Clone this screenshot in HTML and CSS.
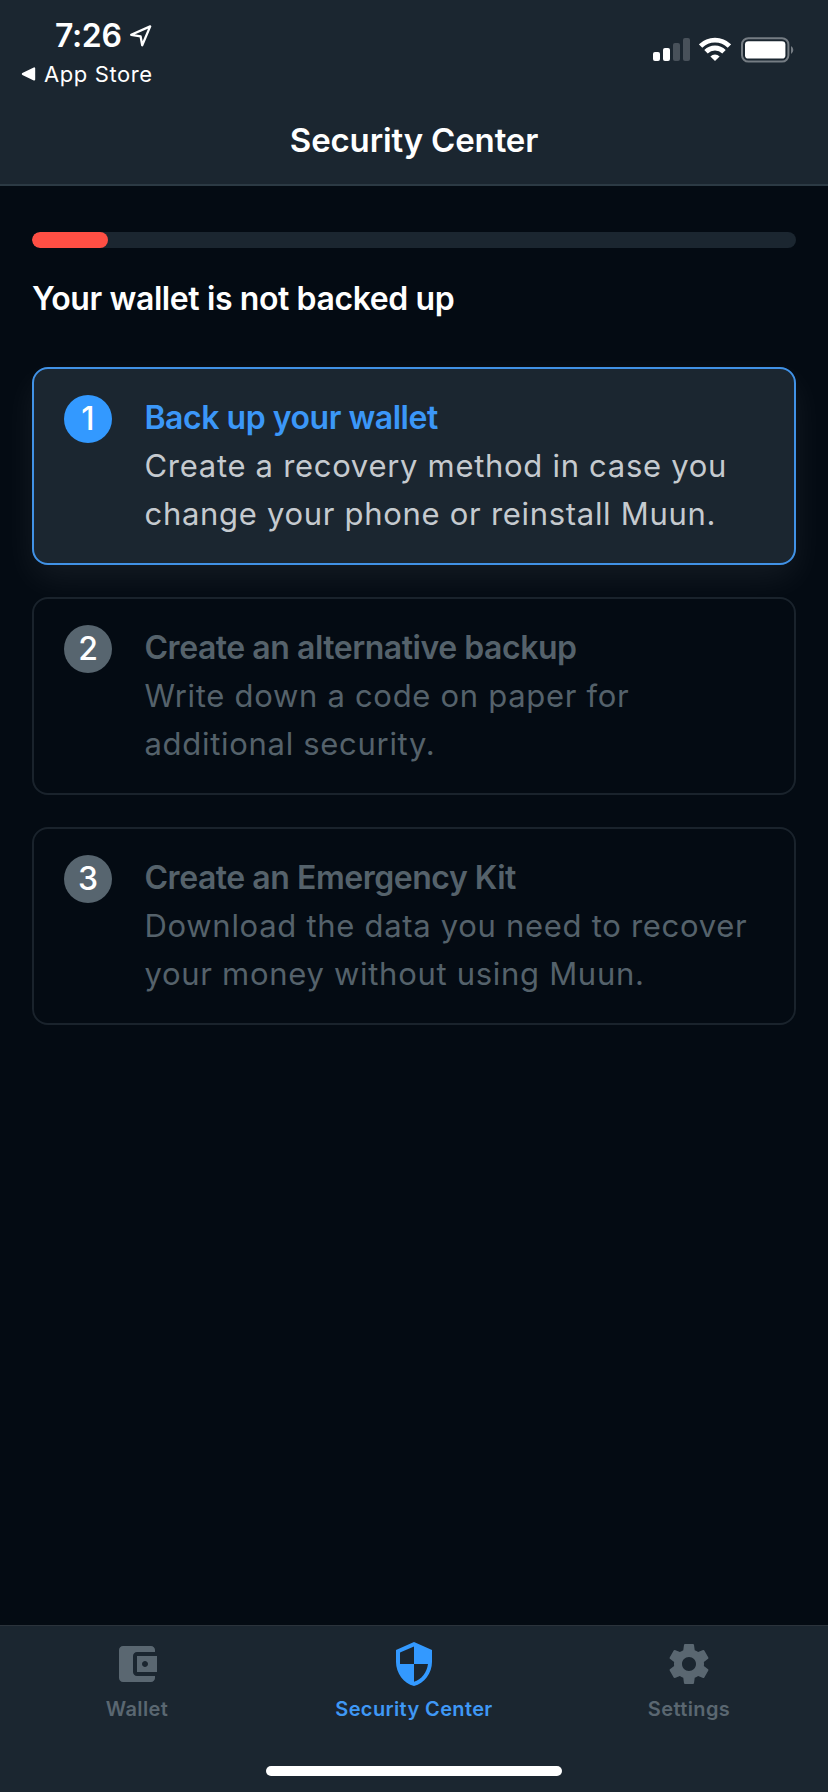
FILE: index.html
```html
<!DOCTYPE html>
<html lang="en">
<head>
<meta charset="utf-8">
<title>Security Center</title>
<link rel="stylesheet" href="styles.css">
</head>
<body>
<div class="screen">
  <header class="header">
    <div class="status">
      <div class="status-left">
        <div class="clock"><span class="time">7:26</span>
          <svg class="locate" width="24" height="24" viewBox="0 0 24 24"><path d="M2.2 10.8 21.2 2.4 13.2 21.2 11.6 12.4Z" fill="none" stroke="#fff" stroke-width="2.3" stroke-linejoin="round"/></svg>
        </div>
        <div class="back">
          <svg width="15" height="14" viewBox="0 0 15 14"><path d="M1.8 7 13.2 1.4V12.6Z" fill="#fff" stroke="#fff" stroke-width="2" stroke-linejoin="round"/></svg>
          <span class="back-label">App Store</span>
        </div>
      </div>
      <div class="status-right">
        <svg width="37" height="24" viewBox="0 0 37 24"><g fill="#fff"><rect x="0" y="14" width="7" height="9" rx="2"/><rect x="10" y="10" width="7" height="13" rx="2"/></g><g fill="#48515a"><rect x="20" y="5" width="7" height="18" rx="2"/><rect x="30" y="0" width="7" height="23" rx="2"/></g></svg>
        <svg class="wifi" width="32" height="24" viewBox="0 0 32 24"><g fill="none" stroke="#fff" stroke-width="4.8"><path d="M1.6 9A20.4 20.4 0 0 1 30.4 9"/><path d="M7 14.8A12.6 12.6 0 0 1 25 14.8"/></g><path d="M16 24 11.4 19.4A6.6 6.6 0 0 1 20.6 19.4Z" fill="#fff"/></svg>
        <svg class="battery" width="54" height="26" viewBox="0 0 54 26"><rect x="1" y="1.2" width="46.4" height="23.4" rx="6.4" fill="none" stroke="#757c83" stroke-width="2"/><rect x="4" y="4.2" width="40.4" height="17.4" rx="3.4" fill="#fff"/><path d="M50 9a4.6 4.6 0 0 1 0 8Z" fill="#757c83"/></svg>
      </div>
    </div>
    <h1 class="title">Security Center</h1>
  </header>

  <main class="content">
    <div class="progress"><div class="progress-fill"></div></div>
    <h2 class="state">Your wallet is not backed up</h2>
    <div class="cards">
      <section class="card card-active">
        <div class="num">1</div>
        <div class="text">
          <h3 class="card-title">Back up your wallet</h3>
          <p class="desc">Create a recovery method in case you<br>change your phone or reinstall Muun.</p>
        </div>
      </section>
      <section class="card">
        <div class="num">2</div>
        <div class="text">
          <h3 class="card-title">Create an alternative backup</h3>
          <p class="desc">Write down a code on paper for<br>additional security.</p>
        </div>
      </section>
      <section class="card">
        <div class="num">3</div>
        <div class="text">
          <h3 class="card-title">Create an Emergency Kit</h3>
          <p class="desc">Download the data you need to recover<br>your money without using Muun.</p>
        </div>
      </section>
    </div>
  </main>

  <footer class="footer">
    <nav class="tabs">
      <div class="tab">
        <svg class="tab-icon" viewBox="0 0 24 24"><path d="M21 18v1c0 1.1-.9 2-2 2H5c-1.11 0-2-.9-2-2V5c0-1.1.89-2 2-2h14c1.1 0 2 .9 2 2v1h-9c-1.11 0-2 .9-2 2v8c0 1.1.89 2 2 2h9zm-9-2h10V8H12v8zm4-2.5c-.83 0-1.5-.67-1.5-1.5s.67-1.5 1.5-1.5 1.5.67 1.5 1.5-.67 1.5-1.5 1.5z"/></svg>
        <span class="tab-label">Wallet</span>
      </div>
      <div class="tab tab-active">
        <svg class="tab-icon" viewBox="0 0 24 24"><path d="M12 1L3 5v6c0 5.55 3.84 10.74 9 12 5.16-1.26 9-6.45 9-12V5l-9-4zm0 10.99h7c-.53 4.12-3.28 7.79-7 8.94V12H5V6.3l7-3.11v8.8z"/></svg>
        <span class="tab-label">Security Center</span>
      </div>
      <div class="tab">
        <svg class="tab-icon" viewBox="0 0 24 24"><path d="M19.43 12.98c.04-.32.07-.64.07-.98s-.03-.66-.07-.98l2.11-1.65c.19-.15.24-.42.12-.64l-2-3.46c-.12-.22-.39-.3-.61-.22l-2.49 1c-.52-.4-1.08-.73-1.69-.98l-.38-2.65C14.46 2.18 14.25 2 14 2h-4c-.25 0-.46.18-.49.42l-.38 2.65c-.61.25-1.17.59-1.69.98l-2.49-1c-.23-.09-.49 0-.61.22l-2 3.46c-.13.22-.07.49.12.64l2.11 1.65c-.04.32-.07.65-.07.98s.03.66.07.98l-2.11 1.65c-.19.15-.24.42-.12.64l2 3.46c.12.22.39.3.61.22l2.49-1c.52.4 1.08.73 1.69.98l.38 2.65c.03.24.24.42.49.42h4c.25 0 .46-.18.49-.42l.38-2.65c.61-.25 1.17-.59 1.69-.98l2.49 1c.23.09.49 0 .61-.22l2-3.46c.12-.22.07-.49-.12-.64l-2.11-1.65zM12 15.5c-1.93 0-3.5-1.57-3.5-3.5s1.57-3.5 3.5-3.5 3.5 1.57 3.5 3.5-1.57 3.5-3.5 3.5z"/></svg>
        <span class="tab-label">Settings</span>
      </div>
    </nav>
    <div class="home"></div>
  </footer>
</div>
</body>
</html>
```
FILE: styles.css
```css
* { box-sizing: border-box; margin: 0; padding: 0; }
body { background: #040b13; font-family: Inter, "Liberation Sans", sans-serif; color: #fff; }
svg { display: block; }
.screen { width: 828px; height: 1792px; display: flex; flex-direction: column; background: #040b13; }

.header { height: 186px; background: #1b2630; border-bottom: 2px solid #2c3a44; }
.status { height: 104px; display: flex; justify-content: space-between; padding: 16px 33px 0 21px; }
.clock { display: flex; align-items: center; height: 40px; padding-left: 34px; }
.time { font-size: 32px; font-weight: 600; line-height: 40px; letter-spacing: -0.35px; }
.locate { margin-left: 7px; }
.back { display: flex; align-items: center; height: 30px; margin-top: 3px; }
.back-label { margin-left: 8px; font-size: 22px; font-weight: 400; line-height: 30px; letter-spacing: 0.6px; }
.status-right { display: flex; padding-top: 22px; }
.wifi { margin: -1px 0 0 9px; }
.battery { margin: -1.5px 0 0 10px; }
.title { text-align: center; font-size: 33px; font-weight: 600; line-height: 40px; margin-top: 16px; letter-spacing: -0.15px; }

.content { flex: 1; padding: 46px 32px 0; }
.progress { height: 16px; border-radius: 8px; background: #1b2630; overflow: hidden; }
.progress-fill { width: 10%; height: 100%; border-radius: 8px; background: #ff4f44; }
.state { margin-top: 27px; font-size: 32px; font-weight: 600; line-height: 48px; letter-spacing: -0.4px; }
.cards { display: flex; flex-direction: column; gap: 32px; margin-top: 44px; }
.card { display: flex; gap: 32.5px; height: 198px; padding: 25px 30px; border: 2px solid #1a232c; border-radius: 16px; color: #55626b; background: #040b13; }
.card-active { background: #1b2630; border-color: #4192e6; color: #c5cacf; box-shadow: 0 14px 34px rgba(255, 255, 255, 0.065); }
.card:not(.card-active) { position: relative; }
.num { flex: none; width: 48px; height: 48px; margin-top: 1px; border-radius: 50%; background: #57656f; color: #fff; font-size: 32px; font-weight: 500; line-height: 48px; text-align: center; }
.card-active .num { background: #3399ff; }
.card-title { font-size: 32px; font-weight: 600; line-height: 48px; letter-spacing: -0.47px; white-space: nowrap; }
.card-active .card-title { color: #3b97f8; }
.desc { font-size: 31px; line-height: 48px; letter-spacing: 0.7px; white-space: nowrap; }

.footer { height: 167px; background: #1b2630; border-top: 1px solid #2b333b; display: flex; flex-direction: column; align-items: center; }
.tabs { width: 828px; height: 140px; display: grid; grid-template-columns: 274px 280px 270px; padding-top: 14px; }
.tab { display: flex; flex-direction: column; align-items: center; color: #5a6771; }
.tab-active { color: #3f98f5; }
.tab-icon { width: 48px; height: 48px; fill: currentColor; }
.tab-active .tab-icon { fill: #3399ff; }
.tab-label { margin-top: 8px; font-size: 20px; font-weight: 600; line-height: 26px; letter-spacing: 0.37px; }
.home { width: 296px; height: 10px; border-radius: 5px; background: #fff; }
```
